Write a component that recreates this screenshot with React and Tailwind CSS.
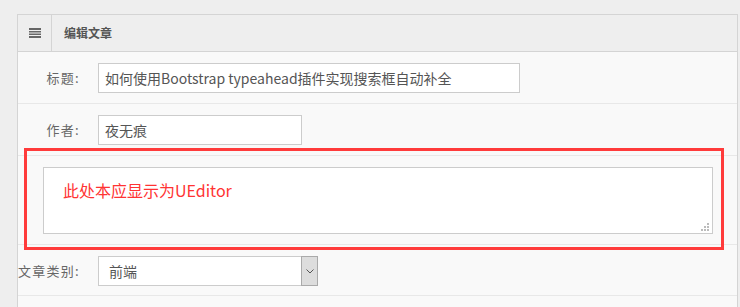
import React from "react";

const font = { fontFamily: '"Noto Sans CJK SC", "Noto Sans", sans-serif' };

const FormRow = ({ label, children, height = "h-[52px]" }) => (
  <div className={`flex items-start ${height} border-b border-[#e8e8e8] pt-[11px]`}>
    <div className="flex h-[30px] w-[62px] items-center justify-end whitespace-nowrap text-[13px] tracking-[1.3px] text-[#666]">
      {label}
    </div>
    <div className="ml-[18px]">{children}</div>
  </div>
);

const ListIcon = () => (
  <svg width="12" height="10" viewBox="0 0 12 10" fill="#666">
    <rect x="0" y="0" width="12" height="2" />
    <rect x="0" y="3" width="12" height="1.5" />
    <rect x="0" y="5.5" width="12" height="1.5" />
    <rect x="0" y="8" width="12" height="2" />
  </svg>
);

const Grip = () => (
  <svg width="8" height="8" viewBox="0 0 8 8" fill="#bbb">
    <rect x="6" y="0" width="2" height="2" />
    <rect x="3" y="3" width="2" height="2" />
    <rect x="6" y="3" width="2" height="2" />
    <rect x="0" y="6" width="2" height="2" />
    <rect x="3" y="6" width="2" height="2" />
    <rect x="6" y="6" width="2" height="2" />
  </svg>
);

export default function App() {
  return (
    <div className="h-[307px] overflow-hidden bg-[#eeeeee] pl-[17px] pr-[2px] pt-[14px]" style={font}>
      <div className="relative h-[400px] border border-[#d4d4d4] bg-[#f9f9f9]">
        {/* header */}
        <div className="flex h-[37px] items-center border-b border-[#d4d4d4] bg-[#eeeeee]">
          <div className="flex h-full w-[34px] items-center justify-center border-r border-[#d4d4d4] pl-[1px]">
            <ListIcon />
          </div>
          <div className="pl-[12px] text-[12px] font-bold leading-none text-[#555]">编辑文章</div>
        </div>

        <FormRow label="标题:">
          <div className="flex h-[30px] w-[422px] items-center border border-[#ccc] bg-white px-[6px] text-[14px] text-[#555]">
            如何使用Bootstrap typeahead插件实现搜索框自动补全
          </div>
        </FormRow>

        <FormRow label="作者:">
          <div className="flex h-[30px] w-[204px] items-center border border-[#ccc] bg-white px-[6px] text-[14px] text-[#555]">
            夜无痕
          </div>
        </FormRow>

        {/* editor placeholder */}
        <div className="h-[89px] border-b border-[#e8e8e8] pl-[25px] pr-[24px] pt-[11px]">
          <div className="relative h-[67px] border border-[#ccc] bg-white pl-[19px] pt-[12px] text-[16px] leading-[20px] text-[#f33]">
            此处本应显示为UEditor
            <div className="absolute bottom-[2px] right-[3px] flex">
              <Grip />
            </div>
          </div>
        </div>

        <FormRow label="文章类别:" height="h-[51px]">
          <div className="flex h-[30px] w-[220px] border border-[#ccc] bg-white text-[14px] text-[#555]">
            <div className="flex flex-1 items-center pl-[10px]">前端</div>
            <div className="flex w-[17px] items-center justify-center border border-[#aaa] bg-[#dddddd] -my-[1px] -mr-[1px]">
              <svg width="8" height="5" viewBox="0 0 8 5" fill="none" stroke="#555" strokeWidth="1">
                <path d="M0.5 0.5 L4 4 L7.5 0.5" />
              </svg>
            </div>
          </div>
        </FormRow>

        {/* annotation box */}
        <div className="pointer-events-none absolute left-[6px] top-[133px] h-[102px] w-[700px] border-[3px] border-[#ff3b3b]" />
      </div>
    </div>
  );
}
